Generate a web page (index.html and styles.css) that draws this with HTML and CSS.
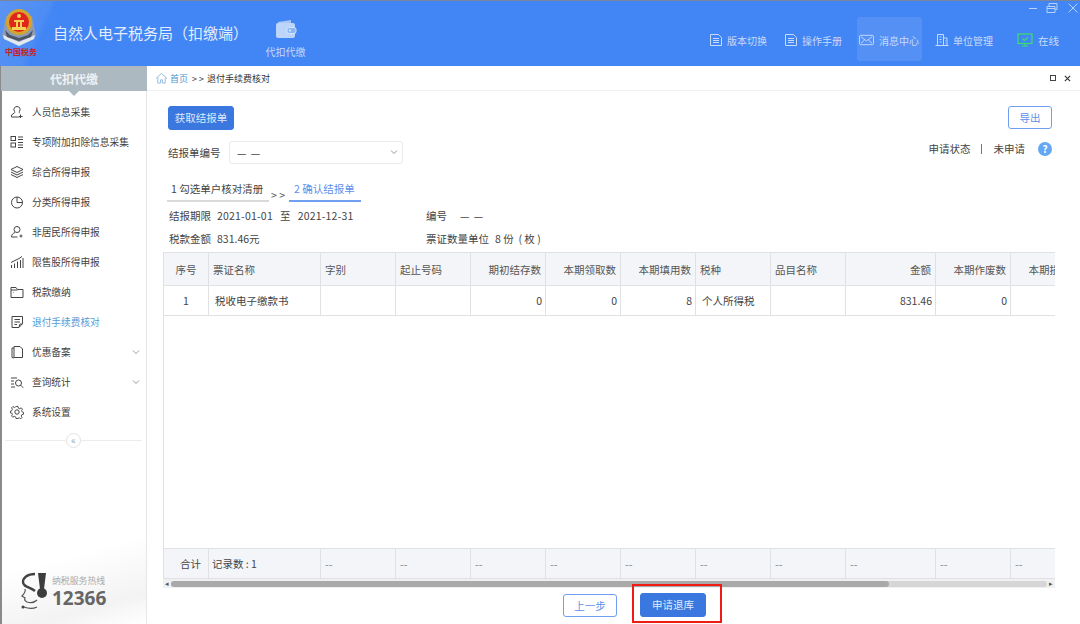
FILE: index.html
```html
<!DOCTYPE html>
<html lang="zh">
<head>
<meta charset="utf-8">
<title>自然人电子税务局（扣缴端）</title>
<link rel="stylesheet" href="styles.css">
</head>
<body>
<div class="app">
  <header class="topbar">
    <div class="logo">
      <svg class="emblem" viewBox="0 0 36 38" width="36" height="38">
        <path d="M1 28 L5 8 L31 8 L35 28 L18 37 Z" fill="#8d9cb2"/>
        <path d="M2 27 L18 34 L34 27 L33 31 L18 38 L3 31 Z" fill="#e4e9f0"/>
        <path d="M4 22 L9 27 L18 30 L27 27 L32 22 L30 29 L18 33 L6 29 Z" fill="#4a5568"/>
        <circle cx="18" cy="14" r="13" fill="#d6a42c"/>
        <circle cx="18" cy="14" r="10" fill="#e0261c"/>
        <path d="M11 19h14v3H11zM13 12h10v2H13zM15 14h2v5h-2zM19 14h2v5h-2z" fill="#f4cf52"/>
        <circle cx="18" cy="8" r="2" fill="#f4cf52"/>
      </svg>
      <span class="seal">中国税务</span>
    </div>
    <div class="apptitle">自然人电子税务局（扣缴端）</div>
    <div class="module">
      <svg viewBox="0 0 22 20" width="22" height="20">
        <path d="M3 3 L16 1 V4 H3Z" fill="#a9c8f7"/>
        <rect x="1" y="4" width="19" height="15" rx="2" fill="#bcd5fa"/>
        <rect x="12" y="8.5" width="9" height="6" rx="2" fill="#8db6f5" stroke="#d5e4fc"/>
        <circle cx="15" cy="11.5" r="1" fill="#e6f0fe"/>
      </svg>
      <span>代扣代缴</span>
    </div>
    <nav class="topnav">
      <a class="navitem">
        <svg class="navicon" viewBox="0 0 14 14"><path d="M1.500 1.500h8l3 3v8h-11zM4 5.500h6M4 7.500h6M4 9.500h6"/></svg>
        <span>版本切换</span>
      </a>
      <a class="navitem">
        <svg class="navicon" viewBox="0 0 14 14"><path d="M1.500 1.500h8l3 3v8h-11zM4 5.500h6M4 7.500h6M4 9.500h6"/></svg>
        <span>操作手册</span>
      </a>
      <a class="navitem active">
        <svg class="navicon wide" viewBox="0 0 16 12"><rect x="0.5" y="1" width="15" height="10" rx="1.500"/><path d="M2 2.500l6 4.500 6-4.500M2 9.500l4-3.500M14 9.500l-4-3.500"/></svg>
        <span>消息中心</span>
      </a>
      <a class="navitem">
        <svg class="navicon" viewBox="0 0 14 14"><path d="M2.500 12.500V1.500h6v11M8.500 5h3.500v7.500M0.500 12.500h13M4.500 4h2M4.500 6.500h2M4.500 9h2M10 7.500h.5M10 10h.5"/></svg>
        <span>单位管理</span>
      </a>
      <a class="navitem online">
        <svg class="monitor" viewBox="0 0 16 14"><rect x="1" y="1" width="14" height="9.500"/><path d="M5 13h6M8 10.500V13M5.500 5.500l2 2 3.500-3"/></svg>
        <span>在线</span>
      </a>
    </nav>
    <div class="winctl">
      <svg viewBox="0 0 12 10" width="12" height="10"><path d="M2 5.500h8"/></svg>
      <svg viewBox="0 0 12 10" width="12" height="10"><path d="M1 3.500h8v6H1zM1 5.500h8M3 3.500v-3h8v6H9"/></svg>
      <svg class="winclose" viewBox="0 0 10 10" width="10" height="10"><path d="M.5.500l9 9M9.500.500l-9 9"/></svg>
    </div>
  </header>

  <div class="body">
    <aside class="sidebar">
      <div class="sidehead">代扣代缴</div>
      <ul class="menu">
        <li class="menuitem">
          <svg class="micon" viewBox="0 0 14 14"><path d="M7 1.500a3 3 0 0 1 2.500 4.800c-.5.800-.4 1.400.4 1.800M7 1.500a3 3 0 0 0-2.500 4.800c.5.800.4 1.400-.4 1.800L1.500 10v2h8M10.500 9.500v3.500M9 11.500h3.500"/></svg>
          <span>人员信息采集</span>
        </li>
        <li class="menuitem">
          <svg class="micon" viewBox="0 0 14 14"><rect x="1" y="1.500" width="4.500" height="4"/><rect x="1" y="8" width="4.500" height="4"/><path d="M8 2h5M8 4.500h5M8 7.500h5M8 10h5M8 12.500h5"/></svg>
          <span>专项附加扣除信息采集</span>
        </li>
        <li class="menuitem">
          <svg class="micon" viewBox="0 0 14 14"><path d="M7 1.500l6 3-6 3-6-3zM1 7l6 3 6-3M1 9.500l6 3 6-3"/></svg>
          <span>综合所得申报</span>
        </li>
        <li class="menuitem">
          <svg class="micon" viewBox="0 0 14 14"><circle cx="7" cy="7.500" r="5.500"/><path d="M7 2v5.500h5.500"/></svg>
          <span>分类所得申报</span>
        </li>
        <li class="menuitem">
          <svg class="micon" viewBox="0 0 14 14"><circle cx="7" cy="4.500" r="3"/><path d="M5 7.500c-2 .8-3.500 2-3.500 4.500h6M11 9.500v3M9.500 11h3"/></svg>
          <span>非居民所得申报</span>
        </li>
        <li class="menuitem">
          <svg class="micon" viewBox="0 0 14 14"><path d="M1.500 13v-3M4.500 13V8.500M7.500 13V6.500M10.500 13V5M13 13V3M1 7.500L9 3.500l3-2"/></svg>
          <span>限售股所得申报</span>
        </li>
        <li class="menuitem">
          <svg class="micon" viewBox="0 0 14 14"><path d="M1 2.500h5l1.500 2H13v8H1zM1 5h6.500M3 7.500h.5"/></svg>
          <span>税款缴纳</span>
        </li>
        <li class="menuitem current">
          <svg class="micon" viewBox="0 0 14 14"><path d="M2 1.500h10.500v7l-3.500 4H2zM4.500 4.500h5.500M4.500 7h5.500M4.500 9.500h2.500M9 12l1-3h2.500"/></svg>
          <span>退付手续费核对</span>
        </li>
        <li class="menuitem">
          <svg class="micon" viewBox="0 0 14 14"><path d="M4 1.500h6l2.500 2.500v8.500H4zM4 3H2v9.500l2 .5"/></svg>
          <span>优惠备案</span>
          <svg class="chev" viewBox="0 0 8 6"><path d="M1 1.500l3 3 3-3"/></svg>
        </li>
        <li class="menuitem">
          <svg class="micon" viewBox="0 0 14 14"><path d="M1 3h6M1 6h3M1 9h3M1 12h4"/><circle cx="8.500" cy="8" r="3"/><path d="M10.700 10.200l2.500 2.500"/></svg>
          <span>查询统计</span>
          <svg class="chev" viewBox="0 0 8 6"><path d="M1 1.500l3 3 3-3"/></svg>
        </li>
        <li class="menuitem">
          <svg class="micon" viewBox="0 0 14 14"><circle cx="7" cy="7" r="2.200"/><path d="M6 1h2l.4 1.800 1.600.7 1.500-1 1.400 1.400-1 1.500.7 1.600 1.400.4v2l-1.800.4-.7 1.600 1 1.500-1.400 1.400-1.500-1-1.600.7L8 14H6l-.4-1.700-1.600-.7-1.500 1-1.400-1.400 1-1.500-.7-1.600L0 8V6l1.400-.4.700-1.600-1-1.500 1.400-1.400 1.500 1 1.600-.7z" transform="translate(.5 .5) scale(.93)"/></svg>
          <span>系统设置</span>
        </li>
      </ul>
      <div class="collapse"><span class="collapsebtn">«</span></div>
      <div class="hotline">
        <svg class="agent" viewBox="0 0 32 38" width="32" height="38">
          <path d="M17 2C9 2 5 6 5 10c0 5 7 5 12 9" fill="none" stroke="#444" stroke-width="2.400"/>
          <path d="M7 17c1 3-1 5-3 7 1 1 2 1 3 2-1 2 0 3 2 4 3 1 7 1 10-2" fill="none" stroke="#555" stroke-width="1.200"/>
          <path d="M6 35c5 2 9 2 13 0" fill="none" stroke="#555" stroke-width="1.200"/>
          <path d="M20 1h8l-2 16h-4z" fill="#3d3d3d"/>
          <circle cx="24" cy="21" r="5" fill="#3d3d3d"/>
          <circle cx="5" cy="35" r="1.500" fill="#444"/>
        </svg>
        <div class="hotlinetext">
          <span class="hotlabel">纳税服务热线</span>
          <span class="hotnum">12366</span>
        </div>
      </div>
    </aside>

    <main class="main">
      <div class="crumbs">
        <svg class="home" viewBox="0 0 14 13"><path d="M1 7l6-5.500L13 7M3 6v6h3V8.500h2V12h3V6"/></svg>
        <span class="crumblink">首页</span>
        <span class="crumbsep">&gt; &gt;</span>
        <span class="crumbnow">退付手续费核对</span>
        <div class="tabctl">
          <span class="tabmax"></span>
          <svg viewBox="0 0 8 8" width="7" height="7"><path d="M1 1l6 6M7 1l-6 6"/></svg>
        </div>
      </div>

      <div class="content">
        <div class="toolbar">
          <button class="btn primary">获取结报单</button>
          <button class="btn outline">导出</button>
        </div>
        <div class="formrow">
          <label class="fieldlabel">结报单编号</label>
          <div class="select"><span class="dashes">— —</span>
            <svg class="chev" viewBox="0 0 8 6"><path d="M1 1.500l3 3 3-3"/></svg>
          </div>
          <div class="status">
            <span>申请状态</span><i class="pipe"></i><span>未申请</span>
            <span class="help">?</span>
          </div>
        </div>
        <div class="steps">
          <span class="step">1 勾选单户核对清册</span>
          <span class="stepsep">&gt; &gt;</span>
          <span class="step on">2 确认结报单</span>
        </div>
        <div class="info">
          <div class="infocol"><span>结报期限</span><span class="period">2021-01-01<span class="to">至</span>2021-12-31</span></div>
          <div class="infocol"><span>编号</span><span class="dashes lead">— —</span></div>
          <div class="infocol"><span>税款金额</span><span>831.46元</span></div>
          <div class="infocol"><span>票证数量单位</span><span>8 份&nbsp;&nbsp;( 枚 )</span></div>
        </div>

        <div class="grid">
          <div class="gridrow head">
            <div class="c ctr">序号</div><div class="c">票证名称</div><div class="c">字别</div><div class="c">起止号码</div><div class="c r">期初结存数</div><div class="c r">本期领取数</div><div class="c r">本期填用数</div><div class="c">税种</div><div class="c">品目名称</div><div class="c r">金额</div><div class="c r">本期作废数</div><div class="c r">本期损失数</div>
          </div>
          <div class="gridrow data">
            <div class="c ctr">1</div><div class="c">税收电子缴款书</div><div class="c"></div><div class="c"></div><div class="c r">0</div><div class="c r">0</div><div class="c r">8</div><div class="c">个人所得税</div><div class="c"></div><div class="c r">831.46</div><div class="c r">0</div><div class="c"></div>
          </div>
          <div class="gridspace"></div>
          <div class="gridrow foot">
            <div class="c r">合计</div><div class="c">记录数 : 1</div><div class="c d">--</div><div class="c d">--</div><div class="c d">--</div><div class="c d">--</div><div class="c d">--</div><div class="c d">--</div><div class="c d">--</div><div class="c d">--</div><div class="c d">--</div><div class="c d">--</div>
          </div>
          <div class="scrollbar">
            <span class="arrow">◂</span>
            <div class="track"><div class="thumb"></div></div>
            <span class="arrow">▸</span>
          </div>
        </div>

        <div class="actions">
          <button class="btn outline prev">上一步</button>
          <div class="highlight"><button class="btn primary apply">申请退库</button></div>
        </div>
      </div>
    </main>
  </div>
</div>
</body>
</html>
```

FILE: styles.css
```css
* { box-sizing: border-box; }
html, body { margin: 0; padding: 0; height: 100%; overflow: hidden; }
body {
  font-family: "Noto Sans CJK SC", "Liberation Sans", sans-serif;
  font-size: 10px;
  color: #444;
  background: #fff;
}
.app { width: 1080px; height: 624px; display: flex; flex-direction: column; }
ul { list-style: none; margin: 0; padding: 0; }
button { font-family: inherit; cursor: pointer; }

.topbar {
  height: 66px;
  flex: none;
  display: flex;
  background: #4285f4;
  border-top: 1px solid #7b8798;
  color: #fff;
  position: relative;
}
.logo {
  width: 53px;
  flex: none;
  display: flex;
  flex-direction: column;
  align-items: flex-start;
  padding: 7px 0 0 1px;
  background: linear-gradient(115deg, #5a93f3 0, #4d8df4 46px, #4285f4 53px) left top / 53px 100% no-repeat;
}
.emblem { flex: none; }
.seal {
  color: #c8201a;
  font-weight: 700;
  font-size: 8px;
  line-height: 10px;
  margin: 1px 0 0 4px;
  white-space: nowrap;
}
.apptitle {
  font-size: 15px;
  line-height: 20px;
  margin-top: 22px;
  width: 206px;
  flex: none;
  color: #e3edfd;
  white-space: nowrap;
}
.module {
  width: 53px;
  flex: none;
  display: flex;
  flex-direction: column;
  align-items: center;
  padding-top: 18px;
  color: #c5daf9;
  gap: 6px;
  line-height: 14px;
}
.topnav {
  margin-left: auto;
  display: flex;
  align-items: flex-start;
  padding: 16px 21px 0 0;
}
.navitem {
  display: flex;
  align-items: center;
  height: 44px;
  gap: 4px;
  color: #c7dbfa;
  padding: 2px 0 0 0;
  margin-left: 17px;
  border-radius: 3px;
  white-space: nowrap;
}
.navitem.active {
  background: #5590f5;
  margin-left: 15px;
  padding-left: 2px;
  gap: 5px;
  width: 65px;
}
.navitem.active + .navitem { margin-left: 13px; }
.navitem.online { margin-left: 24px; font-size: 10.5px; gap: 5px; }
.navicon { width: 14px; height: 14px; fill: none; stroke: #c7dbfa; stroke-width: 1; }
.navicon.wide { width: 15px; }
.monitor { width: 16px; height: 14px; fill: none; stroke: #39e06a; stroke-width: 1.2; }
.winctl {
  position: absolute;
  top: 2px;
  right: 2px;
  display: flex;
  align-items: center;
  gap: 7px;
}
.winctl svg { fill: none; stroke: #b9d2f9; stroke-width: 1; }
.winctl .winclose { margin-left: 3px; }

.body { flex: 1; display: flex; min-height: 0; }

.sidebar {
  width: 147px;
  flex: none;
  border-left: 2px solid #8a8a8a;
  border-right: 1px solid #e6e6e6;
  display: flex;
  flex-direction: column;
  background: linear-gradient(165deg, #fff 85%, #f3f3f3 95%, #fff 100%);
}
.sidehead {
  height: 25px;
  flex: none;
  margin-left: -1px;
  margin-right: -1px;
  background: #adb9c1;
  color: #eef1f3;
  font-size: 12px;
  font-weight: 700;
  text-align: center;
  line-height: 25px;
  position: relative;
}
.sidehead::after {
  content: "";
  position: absolute;
  left: 68px;
  bottom: -5px;
  border: 5px solid transparent;
  border-bottom: 0;
  border-top-color: #adb9c1;
}
.menu { padding-top: 6px; }
.menuitem {
  height: 30px;
  display: flex;
  align-items: center;
  padding-left: 8px;
  gap: 8px;
  color: #3f3f3f;
  font-size: 9.7px;
  white-space: nowrap;
}
.menuitem.current { color: #559bd6; }
.micon { width: 14px; height: 14px; flex: none; fill: none; stroke: #444; stroke-width: 1; }
.chev { width: 8px; height: 6px; fill: none; stroke: #999; stroke-width: 1; }
.menuitem .chev { margin-left: auto; margin-right: 6px; }

.collapse {
  margin: 6px 4px 0 3px;
  height: 15px;
  flex: none;
  display: flex;
  justify-content: center;
  align-items: center;
  background: linear-gradient(#ececec, #ececec) center / 100% 1px no-repeat;
}
.collapsebtn {
  width: 15px;
  height: 15px;
  border: 1px solid #e3e3e3;
  border-radius: 50%;
  background: #fff;
  color: #9aa8b8;
  font-size: 10px;
  line-height: 11px;
  text-align: center;
}
.hotline {
  margin-top: auto;
  padding: 0 0 14px 16px;
  display: flex;
  align-items: flex-end;
  gap: 2px;
}
.agent { flex: none; }
.hotlinetext { display: flex; flex-direction: column; }
.hotlabel { font-size: 8.9px; color: #aaa; line-height: 11px; white-space: nowrap; }
.hotnum {
  font-family: "Open Sans", sans-serif;
  font-weight: 700;
  font-size: 19px;
  line-height: 24px;
  color: #666;
}

.main { flex: 1; min-width: 0; display: flex; flex-direction: column; }
.crumbs {
  height: 25px;
  flex: none;
  display: flex;
  align-items: center;
  padding: 0 9px 0 8px;
  border-bottom: 1px solid #f1f1f1;
  color: #333;
  font-size: 9px;
  gap: 3px;
}
.home { width: 13px; height: 12px; fill: none; stroke: #8fb9dc; stroke-width: 1; }
.crumblink { color: #4a96c9; margin: 0 1px 0 -1px; }
.tabctl { margin-left: auto; display: flex; align-items: center; gap: 8px; }
.tabctl svg { fill: none; stroke: #333; stroke-width: 1.3; }
.tabmax { width: 6px; height: 6px; border: 1.5px solid #444; }

.content {
  flex: 1;
  min-height: 0;
  display: flex;
  flex-direction: column;
  padding-left: 16px;
  font-size: 10.5px;
}
.toolbar {
  display: flex;
  justify-content: space-between;
  padding: 15px 28px 0 5px;
  height: 40px;
  align-items: flex-start;
}
.btn {
  font-size: 10.5px;
  border-radius: 3px;
  padding: 0;
  height: 24px;
  line-height: 22px;
}
.btn.primary { background: #3a78e0; border: 1px solid #3a78e0; color: #dfe9fb; width: 66px; }
.btn.outline { background: #fff; border: 1px solid #6f9fee; color: #5d90ea; width: 44px; height: 23px; }

.formrow { display: flex; align-items: center; height: 24px; padding-left: 5px; margin-top: 9px; }
.fieldlabel { width: 61px; flex: none; white-space: nowrap; }
.select {
  width: 174px;
  height: 23px;
  border: 1px solid #eaeaea;
  border-radius: 3px;
  display: flex;
  align-items: center;
  justify-content: space-between;
  padding: 0 4px 0 7px;
}
.dashes { letter-spacing: 1px; }
.status {
  margin: 0 0 7px auto;
  padding-right: 28px;
  display: flex;
  align-items: center;
  white-space: nowrap;
}
.pipe { width: 1px; height: 10px; background: #777; margin: 0 12px 0 10px; }
.help {
  width: 14px;
  height: 14px;
  margin-left: 13px;
  border-radius: 50%;
  background: #64a8f5;
  color: #fff;
  font-weight: 700;
  font-size: 10px;
  line-height: 14px;
  text-align: center;
}

.steps { display: flex; align-items: flex-end; height: 28px; margin-top: 10px; padding-left: 4px; }
.step {
  height: 22px;
  line-height: 18px;
  border-bottom: 2px solid #d9d9d9;
  padding-left: 4px;
  width: 102px;
  white-space: nowrap;
}
.step.on { color: #5d90ea; border-bottom-color: #6f9fee; width: 72px; padding-left: 5px; }
.stepsep { width: 20px; padding-left: 2px; line-height: 14px; white-space: nowrap; }

.info {
  display: grid;
  grid-template-columns: 257px 1fr;
  grid-auto-rows: 23px;
  padding: 2px 0 0 6px;
  height: 50px;
  line-height: 23px;
}
.infocol { display: flex; gap: 6px; white-space: nowrap; }
.period { letter-spacing: 0.2px; }
.to { margin: 0 7px; }
.lead { margin-left: 7px; }

.grid {
  flex: 1;
  min-height: 0;
  display: flex;
  flex-direction: column;
  width: 892px;
  border-top: 1px solid #dfe1e5;
  overflow: hidden;
}
.gridrow {
  display: grid;
  grid-template-columns: 45px 112px 75px 75px 75px 75px 75px 75px 75px 90px 75px 75px;
  flex: none;
  width: 967px;
  border-left: 1px solid #dfe1e5;
}
.head { height: 33px; background: #f4f5f9; border-bottom: 1px solid #dfe1e5; }
.data { height: 30px; border-bottom: 1px solid #dfe1e5; }
.foot { height: 31px; background: #f4f5f9; border-top: 1px solid #dfe1e5; border-bottom: 1px solid #dfe1e5; }
.gridspace { flex: 1; border-left: 1px solid #dfe1e5; }
.c {
  border-right: 1px solid #dfe1e5;
  padding: 0 4px;
  display: flex;
  align-items: center;
  white-space: nowrap;
  overflow: hidden;
  min-width: 0;
}
.r { justify-content: flex-end; }
.ctr { justify-content: center; }
.head .c { color: #555; }
.data .r { padding-right: 3px; }
.data .c:nth-child(2), .data .c:nth-child(8) { padding-left: 6px; }
.foot .c:first-child { padding-right: 7px; }
.foot .c:nth-child(2) { padding-left: 3px; }
.d { color: #8a8a8a; font-size: 11px; }

.scrollbar {
  flex: none;
  height: 9px;
  display: flex;
  align-items: center;
  background: #f0f0f0;
  color: #555;
  font-size: 7px;
  width: 892px;
}
.arrow { width: 8px; text-align: center; line-height: 9px; flex: none; overflow: hidden; }
.track { flex: 1; height: 6px; background: #d6d6d6; border-radius: 3px; }
.thumb { width: 82%; height: 6px; background: #a9a9a9; border-radius: 3px; }

.actions {
  flex: none;
  height: 36px;
  display: flex;
  padding-left: 400px;
  align-items: flex-start;
}
.btn.prev { width: 54px; height: 23px; margin-top: 6px; }
.highlight {
  margin: -4px 0 0 15px;
  width: 90px;
  height: 39px;
  border: 2px solid #f01c14;
  padding: 7px 0 0 6px;
  flex: none;
}
.btn.apply { width: 66px; height: 24px; }
```
